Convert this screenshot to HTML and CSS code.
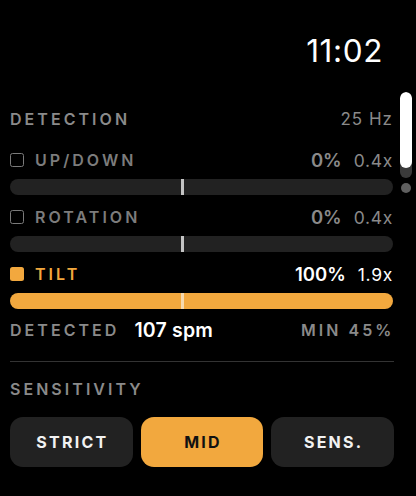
FILE: index.html
```html
<!DOCTYPE html>
<html>
<head>
<meta charset="utf-8">
<link rel="stylesheet" href="styles.css">
</head>
<body>
<div class="screen">
  <header class="header"><span class="clock">11:02</span></header>
  <div class="content">
    <div class="row det-row">
      <span class="cap">DETECTION</span>
      <span class="hz">25 Hz</span>
    </div>
    <div class="sensors">
      <div class="sensor">
        <div class="row label-row">
          <span class="lbl"><span class="box"></span><span class="cap">UP/DOWN</span></span>
          <span class="vals"><span class="pct">0%</span><span class="mul">0.4x</span></span>
        </div>
        <div class="bar"><span class="tick"></span></div>
      </div>
      <div class="sensor">
        <div class="row label-row">
          <span class="lbl"><span class="box"></span><span class="cap">ROTATION</span></span>
          <span class="vals"><span class="pct">0%</span><span class="mul">0.4x</span></span>
        </div>
        <div class="bar"><span class="tick"></span></div>
      </div>
      <div class="sensor active">
        <div class="row label-row">
          <span class="lbl"><span class="box"></span><span class="cap">TILT</span></span>
          <span class="vals"><span class="pct">100%</span><span class="mul">1.9x</span></span>
        </div>
        <div class="bar"><span class="tick"></span></div>
      </div>
    </div>
    <div class="row detected-row">
      <span class="lbl"><span class="cap">DETECTED</span><span class="spm">107 spm</span></span>
      <span class="cap end">MIN 45%</span>
    </div>
    <div class="divider"></div>
    <div class="row sens-row"><span class="cap">SENSITIVITY</span></div>
    <div class="buttons">
      <div class="btn">STRICT</div>
      <div class="btn on">MID</div>
      <div class="btn">SENS.</div>
    </div>
  </div>
  <div class="scroll"><div class="thumb"></div></div>
  <div class="scroll-dot"></div>
</div>
</body>
</html>
```

FILE: styles.css
```css
* { box-sizing: border-box; }
html, body { margin: 0; padding: 0; background: #000; }
body { font-family: Inter, "Noto Sans", sans-serif; color: #fff; }
.screen { position: relative; width: 416px; height: 496px; overflow: hidden; background: #000; }
.header { height: 102px; display: flex; align-items: center; justify-content: flex-end; padding-right: 33px; }
.clock { font-size: 31.5px; line-height: 1; font-weight: 400; letter-spacing: 0.6px; }
.content { padding: 0 24px 0 10px; }
.row { display: flex; align-items: center; justify-content: space-between; }
.cap { font-size: 16px; font-weight: 600; letter-spacing: 0.19em; color: #8a8a8a; line-height: 28px; }
.cap.end { margin-right: -0.15em; }
.det-row { height: 34px; }
.hz { font-size: 17px; color: #8a8a8a; letter-spacing: 0.06em; margin-right: -1px; }
.sensors { margin-top: 10px; display: flex; flex-direction: column; gap: 8px; }
.label-row { height: 28px; }
.lbl { display: flex; align-items: center; }
.box { width: 14px; height: 14px; border: 1.6px solid #7a7a7a; border-radius: 2.5px; margin-right: 11px; }
.sensor .cap { color: #7c7c7c; }
.vals { display: flex; align-items: center; gap: 12px; margin-right: -1px; }
.pct { font-size: 18.5px; font-weight: 600; color: #8a8a8a; }
.mul { font-size: 17.5px; font-weight: 400; color: #8a8a8a; letter-spacing: 0.04em; }
.bar { position: relative; margin-top: 5px; height: 16px; border-radius: 8px; background: #222; margin-right: -1px; }
.tick { position: absolute; left: 171px; top: 0; width: 3px; height: 16px; background: #c4c4c4; }
.sensor.active .box { border: none; background: #f2a83e; border-radius: 2.5px; }
.sensor.active .cap { color: #f2a83e; }
.sensor.active .pct, .sensor.active .mul { color: #fff; }
.sensor.active .bar { background: #f2a83e; }
.sensor.active .tick { background: #f6d9ae; }
.detected-row { margin-top: 7px; height: 28px; }
.spm { margin-left: 15px; font-size: 19.5px; font-weight: 600; color: #fff; letter-spacing: 0.2px; }
.divider { margin-top: 17px; height: 1px; background: #333; margin-right: -2px; }
.sens-row { margin-top: 13px; height: 28px; }
.buttons { margin-top: 14px; margin-right: -2px; display: grid; grid-template-columns: 1fr 1fr 1fr; gap: 8px; }
.btn { height: 50px; border-radius: 13px; background: #222; display: flex; align-items: center; justify-content: center; font-size: 16px; font-weight: 700; letter-spacing: 0.14em; color: #f2f2f2; padding-left: 2px; }
.btn.on { background: #f2a83e; color: #111; }
.scroll { position: absolute; left: 400px; top: 92px; width: 12px; height: 86px; border-radius: 6px; background: #3a3a3a; overflow: hidden; }
.thumb { height: 76px; border-radius: 6px; background: #fff; }
.scroll-dot { position: absolute; left: 401px; top: 183px; width: 10px; height: 10px; border-radius: 50%; background: #5f5f5f; }
```
